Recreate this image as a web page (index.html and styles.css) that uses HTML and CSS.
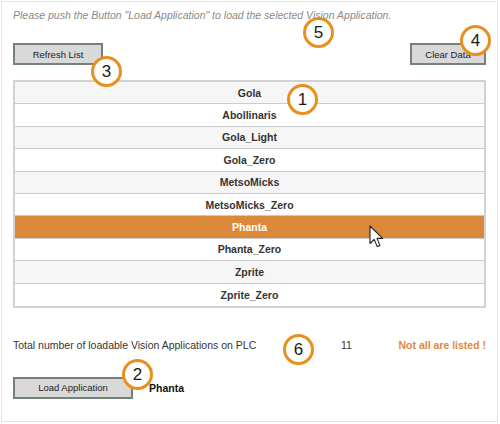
FILE: index.html
```html
<!DOCTYPE html>
<html>
<head>
<meta charset="utf-8">
<link rel="stylesheet" href="styles.css">
</head>
<body>
<div class="panel">
  <p class="hint">Please push the Button "Load Application" to load the selected Vision Application.</p>
  <div class="toolbar">
    <button class="btn btn-refresh">Refresh List</button>
    <button class="btn btn-clear">Clear Data</button>
  </div>
  <ul class="list">
    <li class="row alt">Gola</li>
    <li class="row">Abollinaris</li>
    <li class="row alt">Gola_Light</li>
    <li class="row">Gola_Zero</li>
    <li class="row alt">MetsoMicks</li>
    <li class="row">MetsoMicks_Zero</li>
    <li class="row selected">Phanta</li>
    <li class="row">Phanta_Zero</li>
    <li class="row alt">Zprite</li>
    <li class="row">Zprite_Zero</li>
  </ul>
  <div class="total">
    <span class="total-label">Total number of loadable Vision Applications on PLC</span>
    <span class="total-count">11</span>
    <span class="total-warn">Not all are listed !</span>
  </div>
  <div class="load">
    <button class="btn btn-load">Load Application</button>
    <span class="load-name">Phanta</span>
  </div>
</div>

<span class="callout c1">1</span>
<span class="callout c2">2</span>
<span class="callout c3">3</span>
<span class="callout c4">4</span>
<span class="callout c5">5</span>
<span class="callout c6">6</span>

<svg class="cursor" width="16" height="24" viewBox="0 0 16 24">
  <path d="M1 1 L1 18.5 L5.2 14.4 L8.2 21.6 L10.9 20.4 L8 13.4 L13.6 13.4 Z" fill="#fff" stroke="#222" stroke-width="1.1" stroke-linejoin="round"/>
</svg>
</body>
</html>
```

FILE: styles.css
```css
html, body {
  margin: 0;
  padding: 0;
  background: #fff;
}
body {
  position: relative;
  width: 500px;
  height: 424px;
  font-family: "Liberation Sans", Arial, sans-serif;
  color: #333;
}
.panel {
  position: absolute;
  left: 1px;
  top: 1px;
  width: 497px;
  height: 421px;
  box-sizing: border-box;
  border: 1px solid #e4e4e4;
  padding: 6px 11px 0 11px;
}
.hint {
  margin: 0;
  font-size: 10.5px;
  line-height: 14px;
  font-style: italic;
  color: #8a8a8a;
}
.toolbar {
  display: flex;
  justify-content: space-between;
  margin-top: 21px;
}
.btn {
  height: 22px;
  box-sizing: border-box;
  background: #d9d9d9;
  border: 2px solid #74827b;
  font-family: "Liberation Sans", Arial, sans-serif;
  font-size: 9.5px;
  color: #222;
  padding: 0;
  margin: 0;
}
.btn-refresh { width: 90px; }
.btn-clear { width: 76px; }
.btn-load { width: 120px; height: 22px; }
.list {
  list-style: none;
  margin: 15px 0 0 0;
  padding: 0;
  border: 2px solid #d2d2d2;
}
.row {
  height: 22.4px;
  box-sizing: border-box;
  border-bottom: 1px solid #cbcbcb;
  display: flex;
  align-items: center;
  justify-content: center;
  font-size: 10.5px;
  font-weight: bold;
  color: #333;
  background: #fff;
}
.row:last-child { border-bottom: none; }
.row.alt { background: #f6f6f6; }
.row.selected {
  background: #db8939;
  color: #fff;
}
.total {
  display: flex;
  align-items: center;
  margin-top: 30px;
  font-size: 10.5px;
  line-height: 14px;
}
.total-label { width: 328px; }
.total-count { flex: 1; }
.total-warn {
  font-weight: bold;
  color: #e0883c;
}
.load {
  display: flex;
  align-items: center;
  margin-top: 25px;
}
.load-name {
  margin-left: 16px;
  font-size: 10.5px;
  font-weight: bold;
  color: #111;
}
.callout {
  position: absolute;
  width: 31px;
  height: 31px;
  box-sizing: border-box;
  border: 3px solid #e8901f;
  border-radius: 50%;
  background: #fff;
  display: flex;
  align-items: center;
  justify-content: center;
  font-size: 17px;
  color: #1a1a1a;
}
.c1 { left: 287px; top: 84px; }
.c2 { left: 122px; top: 359px; }
.c3 { left: 91px; top: 56px; }
.c4 { left: 460px; top: 25px; }
.c5 { left: 303px; top: 17px; }
.c6 { left: 283px; top: 334px; }
.cursor {
  position: absolute;
  left: 369px;
  top: 225px;
}
```
